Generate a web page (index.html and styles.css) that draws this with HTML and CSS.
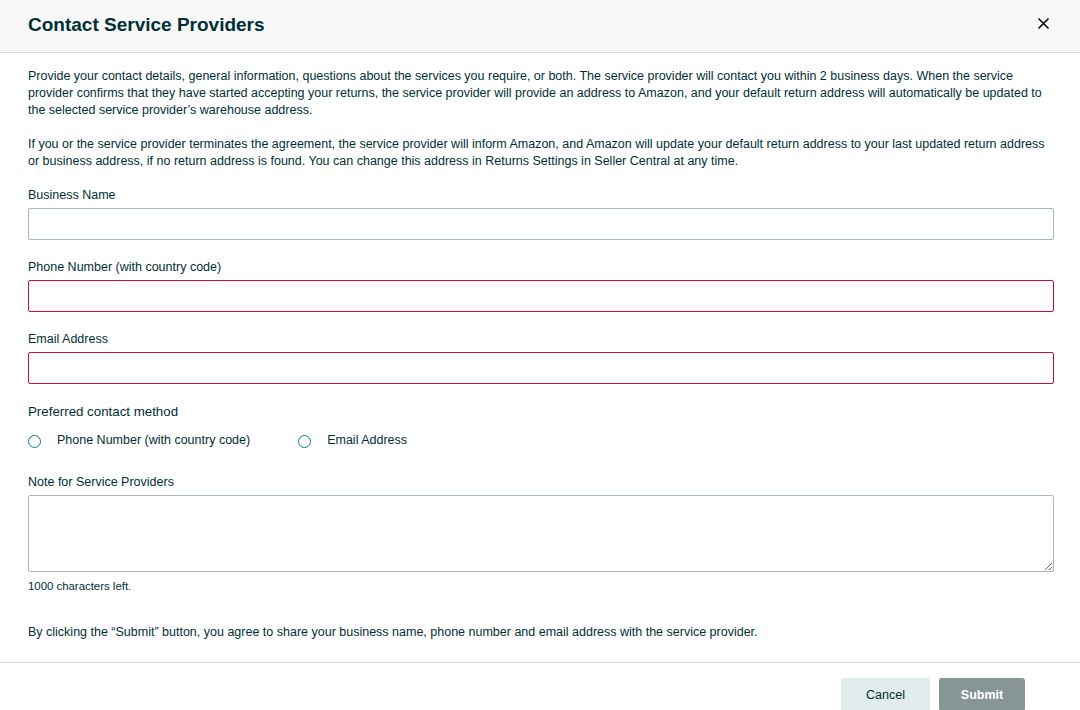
FILE: index.html
```html
<!DOCTYPE html>
<html lang="en">
<head>
    <meta charset="UTF-8">
    <title>Contact Service Providers</title>
    <link rel="stylesheet" href="styles.css">
</head>
<body>
    <div class="modal">
        <div class="modal-header">
            <h1>Contact Service Providers</h1>
            <button class="close-button" aria-label="Close">
                <svg width="11" height="11" viewBox="0 0 11 11"><path d="M1 1L10 10M10 1L1 10" stroke="#0f1111" stroke-width="1.7" stroke-linecap="round"/></svg>
            </button>
        </div>

        <div class="modal-body">
            <p class="intro">Provide your contact details, general information, questions about the services you require, or both. The service provider will contact you within 2 business days. When the service provider confirms that they have started accepting your returns, the service provider will provide an address to Amazon, and your default return address will automatically be updated to the selected service provider’s warehouse address.</p>
            <p class="intro">If you or the service provider terminates the agreement, the service provider will inform Amazon, and Amazon will update your default return address to your last updated return address or business address, if no return address is found. You can change this address in Returns Settings in Seller Central at any time.</p>

            <div class="field">
                <label>Business Name</label>
                <input type="text" class="text-input">
            </div>
            <div class="field">
                <label>Phone Number (with country code)</label>
                <input type="text" class="text-input error">
            </div>
            <div class="field">
                <label>Email Address</label>
                <input type="text" class="text-input error">
            </div>

            <div class="field">
                <div class="group-label">Preferred contact method</div>
                <div class="radio-row">
                    <label class="radio"><span class="radio-circle"></span>Phone Number (with country code)</label>
                    <label class="radio"><span class="radio-circle"></span>Email Address</label>
                </div>
            </div>

            <div class="field note-field">
                <label>Note for Service Providers</label>
                <textarea class="note"></textarea>
                <div class="char-count">1000 characters left.</div>
            </div>

            <p class="consent">By clicking the “Submit” button, you agree to share your business name, phone number and email address with the service provider.</p>
        </div>

        <div class="modal-footer">
            <button class="btn btn-cancel">Cancel</button>
            <button class="btn btn-submit">Submit</button>
        </div>
    </div>
</body>
</html>
```

FILE: styles.css
```css
* {
    box-sizing: border-box;
    margin: 0;
    padding: 0;
}

body {
    font-family: 'Liberation Sans', Arial, sans-serif;
    color: #002f36;
    background-color: #ffffff;
    overflow: hidden;
}

.modal {
    width: 1080px;
    height: 710px;
}

.modal-header {
    height: 53px;
    background-color: #f8f8f8;
    border-bottom: 1px solid #d5dbdb;
    display: flex;
    align-items: center;
    justify-content: space-between;
    padding: 0 31px 0 28px;
}

.modal-header h1 {
    font-size: 19px;
    font-weight: bold;
    color: #002f36;
    margin-top: -2px;
}

.close-button {
    background: none;
    border: none;
    cursor: pointer;
    display: flex;
    margin-top: -6px;
}

.modal-body {
    padding: 15px 26px 0 28px;
}

.intro {
    font-size: 12.5px;
    line-height: 17px;
    margin-bottom: 17px;
}

.field {
    margin-bottom: 19px;
}

.field label {
    display: block;
    font-size: 12.5px;
    line-height: 17px;
    margin-bottom: 4px;
}

.text-input {
    display: block;
    width: 100%;
    height: 32px;
    border: 1px solid #aab7b8;
    border-radius: 2px;
    background-color: #fff;
}

.text-input.error {
    border-color: #cc0c39;
}

.group-label {
    font-size: 13.3px;
    line-height: 17px;
    margin-bottom: 12px;
}

.radio-row {
    display: flex;
}

.field .radio {
    display: flex;
    align-items: center;
    font-size: 12.5px;
    line-height: 17px;
    margin-bottom: 0;
    margin-right: 48px;
}

.radio-circle {
    width: 13px;
    height: 13px;
    border: 1px solid #008296;
    border-radius: 50%;
    margin-right: 16px;
    margin-top: 2px;
}

.note-field {
    margin-top: 25px;
}

.note {
    display: block;
    width: 100%;
    height: 77px;
    border: 1px solid #aab7b8;
    border-radius: 2px;
    font-family: inherit;
}

.char-count {
    font-size: 11.4px;
    line-height: 14px;
    margin-top: 7px;
}

.consent {
    font-size: 12.5px;
    line-height: 17px;
    margin-top: 31px;
}

.modal-footer {
    margin-top: 21px;
    border-top: 1px solid #d5dbdb;
    display: flex;
    justify-content: flex-end;
    gap: 9px;
    padding: 15px 55px 0 0;
}

.btn {
    height: 33px;
    border: none;
    border-radius: 3px;
    font-family: inherit;
    font-size: 12.5px;
    cursor: pointer;
}

.btn-cancel {
    width: 89px;
    background-color: #e3eced;
    color: #002f36;
}

.btn-submit {
    width: 86px;
    background-color: #879596;
    color: #ffffff;
    font-weight: bold;
}
```
